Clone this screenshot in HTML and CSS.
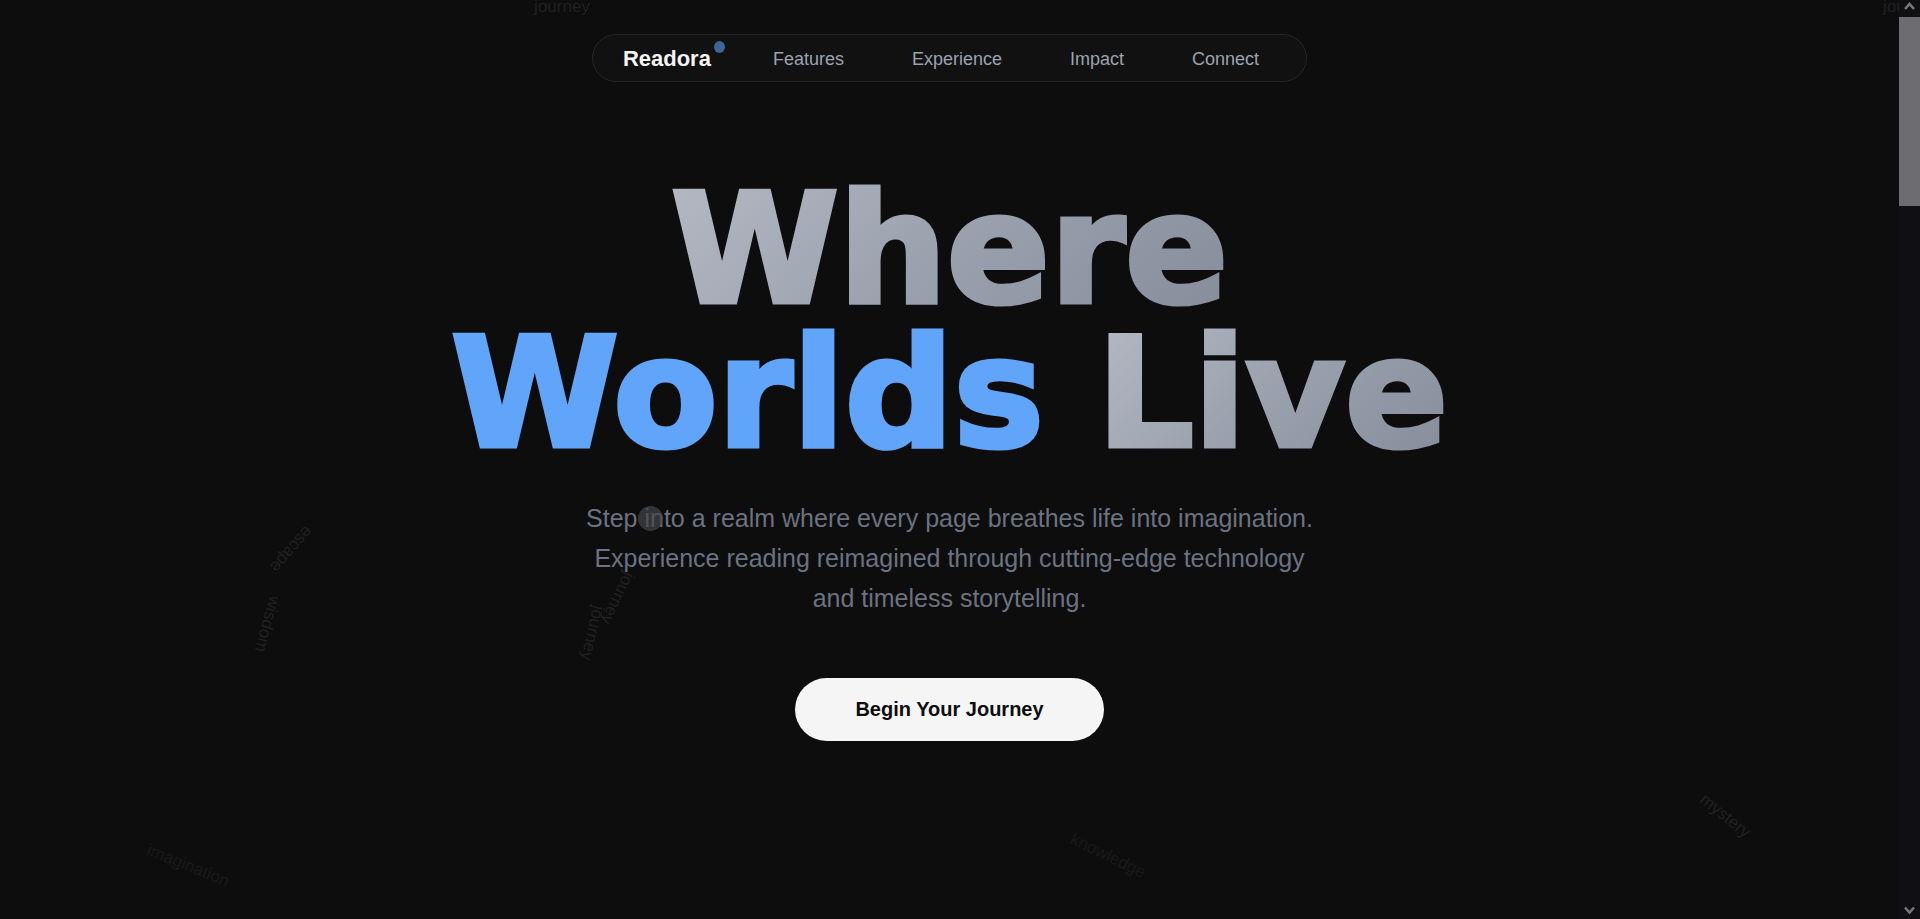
FILE: index.html
```html
<!DOCTYPE html>
<html lang="en">
<head>
<meta charset="utf-8">
<title>Readora</title>
<link rel="stylesheet" href="styles.css">
</head>
<body>
<div class="page">
  <div class="words" aria-hidden="true">
    <span class="word" style="left:562px;top:7px;--turn:0deg">journey</span>
    <span class="word" style="left:1911px;top:7px;--turn:0deg">journey</span>
    <span class="word" style="left:291px;top:549px;--turn:131deg">escape</span>
    <span class="word" style="left:267px;top:624px;--turn:105deg">wisdom</span>
    <span class="word" style="left:617px;top:598px;--turn:116deg">journey</span>
    <span class="word" style="left:592px;top:633px;--turn:103deg">journey</span>
    <span class="word" style="left:1725px;top:816px;--turn:39deg">mystery</span>
    <span class="word faint" style="left:188px;top:866px;--turn:22deg">imagination</span>
    <span class="word faint" style="left:1108px;top:856px;--turn:26deg">knowledge</span>
  </div>
  <header class="header">
    <nav class="nav">
      <a class="brand" href="#">Readora<span class="dot"></span></a>
      <a class="link" href="#features">Features</a>
      <a class="link" href="#experience">Experience</a>
      <a class="link" href="#impact">Impact</a>
      <a class="link" href="#connect">Connect</a>
    </nav>
  </header>
  <main class="hero">
    <h1 class="title">
      <span class="title-word">Where</span><br>
      <span class="title-word accent">Worlds</span> <span class="title-word">Live</span>
    </h1>
    <p class="lead">Step into a realm where every page breathes life into imagination. Experience reading reimagined through cutting-edge technology and timeless storytelling.</p>
    <button class="cta" type="button">Begin Your Journey</button>
  </main>
  <div class="cursor"></div>
</div>
<div class="scrollbar" aria-hidden="true">
  <svg class="arrow" viewBox="0 0 21 17"><path d="M6 9 10.500 4 15 9" fill="none" stroke="#77777a" stroke-width="2.600"/></svg>
  <div class="thumb"></div>
  <svg class="arrow last" viewBox="0 0 21 17"><path d="M6 5.500 10.500 10.500 15 5.500" fill="none" stroke="#77777a" stroke-width="2.600"/></svg>
</div>
</body>
</html>
```
FILE: styles.css
```css
* { box-sizing: border-box; }

body {
  margin: 0;
  min-height: 100vh;
  display: grid;
  grid-template-columns: 1fr 21px;
  background: #0d0d0d;
  font-family: "Liberation Sans", Arial, sans-serif;
  overflow: hidden;
}

.page {
  position: relative;
  min-width: 0;
  overflow: hidden;
}

.word {
  position: absolute;
  transform: translate(-50%, -50%) rotate(var(--turn));
  font-size: 17px;
  line-height: 24px;
  color: #202021;
}

.faint { color: #18191a; }

.header {
  display: flex;
  justify-content: center;
  padding-top: 34px;
}

.nav {
  position: relative;
  display: flex;
  align-items: center;
  gap: 68px;
  height: 48px;
  padding: 2px 47px 0 30px;
  border: 1px solid #242527;
  border-radius: 24px;
  background: #111111;
}

.brand {
  position: relative;
  margin-right: -6px;
  font-size: 22px;
  font-weight: 700;
  color: #f5f5f5;
  text-decoration: none;
}

.dot {
  position: absolute;
  top: -5px;
  right: -14px;
  width: 11px;
  height: 12px;
  border-radius: 50%;
  background: #3d6597;
}

.link {
  font-size: 18px;
  color: #9ca3af;
  text-decoration: none;
}

.hero {
  position: relative;
  display: flex;
  flex-direction: column;
  align-items: center;
  padding: 96px 24px 0;
}

.title {
  margin: 0;
  font-family: "Arial Black", "DejaVu Sans", sans-serif;
  font-size: 152px;
  font-weight: 900;
  line-height: 144px;
  text-align: center;
  white-space: nowrap;
}

.title-word {
  display: inline-block;
  color: transparent;
  background: linear-gradient(135deg, #b5b8c3 0%, #9ca3af 45%, #858d9b 100%);
  background-clip: text;
  -webkit-background-clip: text;
  -webkit-text-stroke: 5px transparent;
}

.accent {
  color: #60a5fa;
  background: none;
  -webkit-text-stroke-color: #60a5fa;
}

.lead {
  max-width: 740px;
  margin: 32px 0 0;
  font-size: 25px;
  line-height: 40px;
  text-align: center;
  color: #6b7280;
}

.cta {
  margin-top: 60px;
  padding: 20px 60px;
  border: 0;
  border-radius: 32px;
  background: #f5f5f5;
  color: #0d0d0d;
  font-family: inherit;
  font-size: 20px;
  font-weight: 700;
  line-height: 23px;
}

.cursor {
  position: absolute;
  left: 638px;
  top: 506px;
  width: 25px;
  height: 25px;
  border-radius: 50%;
  background: rgba(69, 70, 73, 0.7);
}

.scrollbar {
  display: flex;
  flex-direction: column;
  background: #101013;
}

.arrow {
  display: block;
  width: 21px;
  height: 17px;
}

.last { margin-top: auto; }

.thumb {
  height: 189px;
  background: #6d6d6f;
}
```
